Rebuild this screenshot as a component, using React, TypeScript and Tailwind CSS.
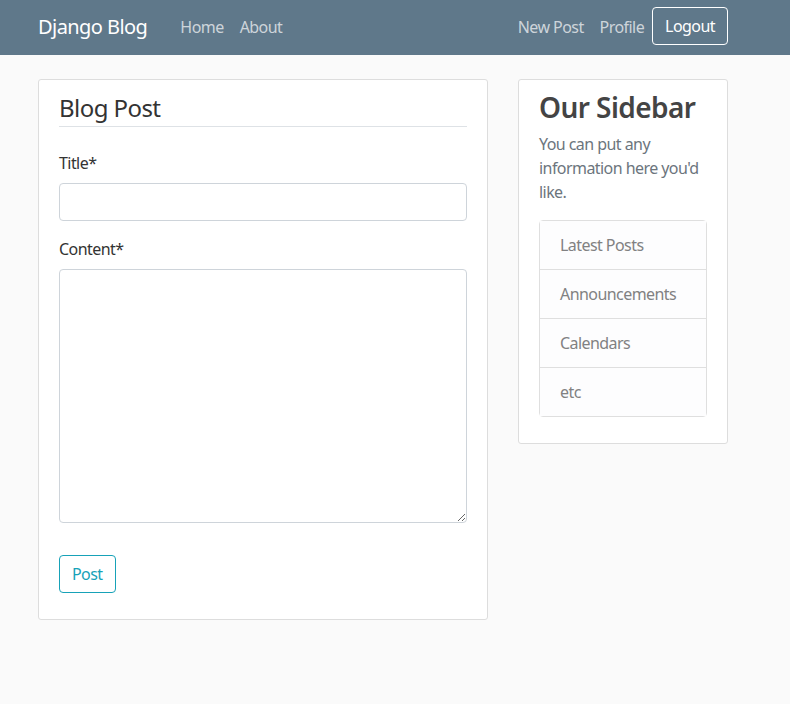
import React from "react";

const font = { fontFamily: '"Noto Sans", "Open Sans", sans-serif' };

export default function App() {
  return (
    <div className="min-h-[704px] bg-[#fafafa] text-[#333333] tracking-[-0.035em]" style={font}>
      <nav className="h-[55px] bg-[#5f788a]">
        <div className="ml-[38px] w-[690px] h-full flex items-center pb-[3px]">
          <span className="text-white text-[20px] mr-[33px] mt-[2px]">Django Blog</span>
          <div className="flex gap-[16px] text-[16px] text-white/70 mt-[2px]">
            <span>Home</span>
            <span>About</span>
          </div>
          <div className="ml-auto flex items-center gap-[16px] text-[16px] text-white/70">
            <span className="mt-[2px]">New Post</span>
            <span className="mt-[2px]">Profile</span>
            <span className="ml-[-8px] h-[38px] px-[12px] flex items-center border border-white rounded-[4px] text-white">
              Logout
            </span>
          </div>
        </div>
      </nav>
      <div className="ml-[38px] mt-[24px] flex gap-[30px] items-start">
        <div className="w-[450px] bg-white border border-[#dddddd] rounded-[3px] px-[20px] py-[10px]">
          <div className="text-[24px] leading-[36px] text-[#333333] border-b border-[#dee2e6] mb-[24px]">Blog Post</div>
          <div className="text-[16px] leading-[24px] mb-[8px]">Title*</div>
          <div className="h-[38px] border border-[#ced4da] rounded-[4px] bg-white mb-[16px]" />
          <div className="text-[16px] leading-[24px] mb-[8px]">Content*</div>
          <textarea className="block w-full h-[254px] border border-[#ced4da] rounded-[4px] bg-white mb-[32px] outline-none" />
          <div className="mb-[16px]">
            <span className="inline-flex h-[38px] items-center px-[12px] border border-[#17a2b8] text-[#17a2b8] rounded-[4px] text-[16px]">
              Post
            </span>
          </div>
        </div>
        <div className="w-[210px] bg-white border border-[#dddddd] rounded-[3px] px-[20px] py-[10px]">
          <div className="text-[28px] leading-[34px] font-semibold text-[#444444] mb-[8px]">Our Sidebar</div>
          <p className="text-[16px] leading-[24px] text-[#6c757d] mb-[16px]">
            You can put any information here you'd like.
          </p>
          <ul className="border border-[#dfdfdf] rounded-[4px] mb-[16px]">
            {["Latest Posts", "Announcements", "Calendars", "etc"].map((t, i) => (
              <li
                key={t}
                className={`bg-[#fdfdfe] text-[#818182] text-[16px] leading-[24px] px-[20px] py-[12px] ${
                  i > 0 ? "border-t border-[#dfdfdf]" : ""
                }`}
              >
                {t}
              </li>
            ))}
          </ul>
        </div>
      </div>
    </div>
  );
}
